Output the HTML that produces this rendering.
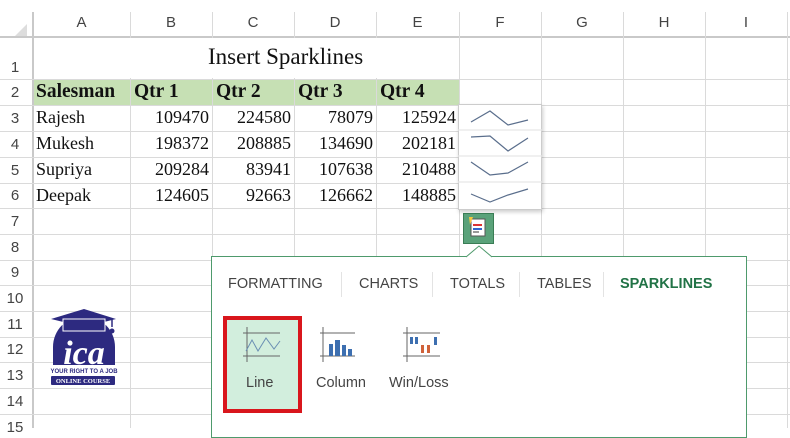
<!DOCTYPE html>
<html><head><style>
body{margin:0;width:790px;height:428px;overflow:hidden;background:#fff;position:relative;font-family:"Liberation Sans",sans-serif}
.a{position:absolute}
.vl{position:absolute;width:1px;background:#dadada}
.hl{position:absolute;height:1px;background:#dadada}
.ch{position:absolute;top:14px;font-size:15px;color:#444;text-align:center}
.rh{position:absolute;left:0;width:30px;text-align:center;font-size:15px;color:#444}
.c{position:absolute;font-family:"Liberation Serif",serif;font-size:18px;color:#111}
.b{font-weight:bold;font-size:19.5px;top:81px}
.r{text-align:right}
.tab{position:absolute;top:276px;font-size:14.5px;color:#444}
</style></head><body>
<div class="a" style="left:0;top:36px;width:790px;height:2px;background:#c9c9c9"></div>
<div class="a" style="left:32px;top:12px;width:2px;height:416px;background:#c9c9c9"></div>
<div class="a" style="left:15px;top:24px;width:0;height:0;border-left:12px solid transparent;border-bottom:12px solid #ddd"></div>
<div class="a" style="left:34px;top:79px;width:425px;height:26px;background:#c6e0b4"></div>
<div class="vl" style="left:130px;top:12px;height:416px"></div>
<div class="vl" style="left:212px;top:12px;height:416px"></div>
<div class="vl" style="left:294px;top:12px;height:416px"></div>
<div class="vl" style="left:376px;top:12px;height:416px"></div>
<div class="vl" style="left:459px;top:12px;height:416px"></div>
<div class="vl" style="left:541px;top:12px;height:416px"></div>
<div class="vl" style="left:623px;top:12px;height:416px"></div>
<div class="vl" style="left:705px;top:12px;height:416px"></div>
<div class="vl" style="left:787px;top:12px;height:416px"></div>
<div class="a" style="left:34px;top:38px;width:425px;height:40px;background:#fff"></div>
<div class="hl" style="left:0;top:79px;width:790px"></div>
<div class="hl" style="left:0;top:105px;width:790px"></div>
<div class="hl" style="left:0;top:131px;width:790px"></div>
<div class="hl" style="left:0;top:157px;width:790px"></div>
<div class="hl" style="left:0;top:183px;width:790px"></div>
<div class="hl" style="left:0;top:208px;width:790px"></div>
<div class="hl" style="left:0;top:234px;width:790px"></div>
<div class="hl" style="left:0;top:260px;width:790px"></div>
<div class="hl" style="left:0;top:285px;width:790px"></div>
<div class="hl" style="left:0;top:311px;width:790px"></div>
<div class="hl" style="left:0;top:337px;width:790px"></div>
<div class="hl" style="left:0;top:362px;width:790px"></div>
<div class="hl" style="left:0;top:388px;width:790px"></div>
<div class="hl" style="left:0;top:414px;width:790px"></div>
<div class="ch" style="left:33px;width:97px">A</div>
<div class="ch" style="left:130px;width:82px">B</div>
<div class="ch" style="left:212px;width:82px">C</div>
<div class="ch" style="left:294px;width:82px">D</div>
<div class="ch" style="left:376px;width:83px">E</div>
<div class="ch" style="left:459px;width:82px">F</div>
<div class="ch" style="left:541px;width:82px">G</div>
<div class="ch" style="left:623px;width:82px">H</div>
<div class="ch" style="left:705px;width:82px">I</div>
<div class="rh" style="top:59px">1</div>
<div class="rh" style="top:84px">2</div>
<div class="rh" style="top:110px">3</div>
<div class="rh" style="top:136px">4</div>
<div class="rh" style="top:162px">5</div>
<div class="rh" style="top:187px">6</div>
<div class="rh" style="top:213px">7</div>
<div class="rh" style="top:239px">8</div>
<div class="rh" style="top:264px">9</div>
<div class="rh" style="top:290px">10</div>
<div class="rh" style="top:316px">11</div>
<div class="rh" style="top:341px">12</div>
<div class="rh" style="top:367px">13</div>
<div class="rh" style="top:393px">14</div>
<div class="rh" style="top:419px">15</div>
<div class="c" style="left:208px;top:44px;font-size:23px">Insert Sparklines</div>
<div class="c b" style="left:36px">Salesman</div>
<div class="c b" style="left:134px">Qtr 1</div>
<div class="c b" style="left:216px">Qtr 2</div>
<div class="c b" style="left:298px">Qtr 3</div>
<div class="c b" style="left:380px">Qtr 4</div>
<div class="c" style="left:36px;top:107px">Rajesh</div>
<div class="c" style="left:36px;top:133px">Mukesh</div>
<div class="c" style="left:36px;top:159px">Supriya</div>
<div class="c" style="left:36px;top:185px">Deepak</div>
<div class="c r" style="left:130px;width:79px;top:107px">109470</div>
<div class="c r" style="left:212px;width:79px;top:107px">224580</div>
<div class="c r" style="left:294px;width:79px;top:107px">78079</div>
<div class="c r" style="left:376px;width:80px;top:107px">125924</div>
<div class="c r" style="left:130px;width:79px;top:133px">198372</div>
<div class="c r" style="left:212px;width:79px;top:133px">208885</div>
<div class="c r" style="left:294px;width:79px;top:133px">134690</div>
<div class="c r" style="left:376px;width:80px;top:133px">202181</div>
<div class="c r" style="left:130px;width:79px;top:159px">209284</div>
<div class="c r" style="left:212px;width:79px;top:159px">83941</div>
<div class="c r" style="left:294px;width:79px;top:159px">107638</div>
<div class="c r" style="left:376px;width:80px;top:159px">210488</div>
<div class="c r" style="left:130px;width:79px;top:185px">124605</div>
<div class="c r" style="left:212px;width:79px;top:185px">92663</div>
<div class="c r" style="left:294px;width:79px;top:185px">126662</div>
<div class="c r" style="left:376px;width:80px;top:185px">148885</div>
<div class="a" style="left:458px;top:104px;width:82px;height:104px;background:#fff;border:1px solid #ccc;box-shadow:1px 2px 4px rgba(0,0,0,.2)"></div>
<svg class="a" style="left:458px;top:104px" width="84" height="106"><g fill="none" stroke="#5a6e8c" stroke-width="1.2">
<line x1="0" y1="26" x2="84" y2="26" stroke="#e6e6e6"/><line x1="0" y1="52" x2="84" y2="52" stroke="#e6e6e6"/><line x1="0" y1="78" x2="84" y2="78" stroke="#e6e6e6"/>
<polyline points="13,18 32,7 50,21 70,16"/>
<polyline points="13,33 32,32 50,47 70,34"/>
<polyline points="13,58 32,71 50,69 70,58"/>
<polyline points="13,90 32,98 50,91 70,85"/></g></svg>
<div class="a" style="left:463px;top:213px;width:29px;height:29px;background:#5aa27a;border:1px solid #3a7d55"></div>
<svg class="a" style="left:463px;top:213px" width="30" height="30"><rect x="8" y="6" width="14" height="17" fill="#fff" stroke="#555"/><rect x="10" y="11" width="9" height="2" fill="#d33"/><rect x="10" y="15" width="9" height="2" fill="#36c"/><rect x="10" y="18" width="6" height="2" fill="#999"/><path d="M6 4 L10 4 L7 12 Z" fill="#f5c842"/></svg>
<div class="a" style="left:211px;top:256px;width:534px;height:180px;background:#fff;border:1px solid #4e9a6c"></div>
<svg class="a" style="left:466px;top:245px" width="26" height="13"><path d="M0 12 L13 1 L26 12" fill="#fff" stroke="#4e9a6c"/></svg>
<div class="tab" style="left:228px">FORMATTING</div>
<div class="a" style="left:341px;top:272px;width:1px;height:25px;background:#e3e3e3"></div>
<div class="tab" style="left:359px">CHARTS</div>
<div class="a" style="left:432px;top:272px;width:1px;height:25px;background:#e3e3e3"></div>
<div class="tab" style="left:450px">TOTALS</div>
<div class="a" style="left:519px;top:272px;width:1px;height:25px;background:#e3e3e3"></div>
<div class="tab" style="left:537px">TABLES</div>
<div class="a" style="left:603px;top:272px;width:1px;height:25px;background:#e3e3e3"></div>
<div class="tab" style="left:620px;color:#217346;font-weight:bold">SPARKLINES</div>
<div class="a" style="left:223px;top:316px;width:71px;height:89px;background:#d2eedd;border:4px solid #d9161c"></div>
<svg class="a" style="left:240px;top:325px" width="120" height="40" overflow="visible"><g stroke="#666" stroke-width="1" fill="none">
<line x1="7" y1="2" x2="7" y2="37"/><line x1="3" y1="8" x2="40" y2="8"/><line x1="3" y1="31" x2="40" y2="31"/>
<polyline points="6,26 12,15 18,26 26,13 34,24 40,16" stroke="#6a8fb3"/>
<line x1="83" y1="2" x2="83" y2="37"/><line x1="80" y1="8" x2="115" y2="8"/><line x1="80" y1="31" x2="115" y2="31"/></g>
<g fill="#3d6fb0"><rect x="89" y="19" width="4" height="12"/><rect x="95" y="15" width="5" height="16"/><rect x="102" y="20" width="4" height="11"/><rect x="108" y="24" width="4" height="7"/></g></svg>
<svg class="a" style="left:400px;top:325px" width="50" height="40"><g stroke="#666" fill="none"><line x1="7" y1="2" x2="7" y2="37"/><line x1="3" y1="8" x2="40" y2="8"/><line x1="3" y1="31" x2="40" y2="31"/></g>
<g fill="#3d6fb0"><rect x="10" y="12" width="3" height="7"/><rect x="15" y="12" width="3" height="7"/><rect x="34" y="12" width="3" height="8"/></g>
<g fill="#d0623a"><rect x="21" y="20" width="3" height="8"/><rect x="27" y="20" width="3" height="8"/></g></svg>
<div class="a" style="left:246px;top:375px;font-size:14.5px;color:#444">Line</div>
<div class="a" style="left:316px;top:375px;font-size:14.5px;color:#444">Column</div>
<div class="a" style="left:389px;top:375px;font-size:14.5px;color:#444">Win/Loss</div>
<svg class="a" style="left:48px;top:305px" width="72" height="80">
<path d="M3 14 L36 4 L68 14 L36 22 Z" fill="#2d2a80"/>
<line x1="64" y1="13" x2="64" y2="22" stroke="#2d2a80" stroke-width="1.5"/><circle cx="64" cy="26" r="2.5" fill="#2d2a80"/>
<path d="M5 60 L5 42 A31 31 0 0 1 67 42 L67 60 Z" fill="#2d2a80"/>
<rect x="15" y="14" width="42" height="12" fill="#2d2a80" stroke="#fff" stroke-width="1"/>
<text x="36" y="59" font-family="Liberation Serif,serif" font-style="italic" font-weight="bold" font-size="34" fill="#fff" text-anchor="middle">ica</text>
<text x="36" y="68" font-family="Liberation Sans,sans-serif" font-weight="bold" font-size="6" fill="#2d2a80" text-anchor="middle">YOUR RIGHT TO A JOB</text>
<rect x="3" y="71" width="64" height="9" rx="1" fill="#2d2a80"/>
<text x="35" y="78" font-family="Liberation Serif,serif" font-weight="bold" font-size="6.5" fill="#fff" text-anchor="middle">ONLINE COURSE</text>
</svg>
</body></html>
